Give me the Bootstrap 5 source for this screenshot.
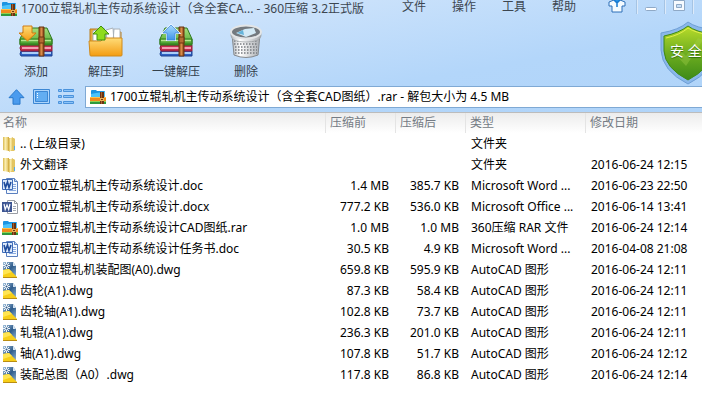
<!DOCTYPE html>
<html lang="zh-CN">
<head>
<meta charset="utf-8">
<meta name="viewport" content="width=device-width, initial-scale=1">
<title>360压缩</title>
<link href="https://cdn.jsdelivr.net/npm/bootstrap@5.3.0/dist/css/bootstrap.min.css" rel="stylesheet">
<style>
body{font-family:"Noto Sans","Noto Sans CJK SC",sans-serif;font-size:12px;line-height:20px;color:#000;background:#fff;overflow-x:hidden}
svg{display:block;flex:none}
.app-head{background:linear-gradient(170deg,#d8eafc 0%,#cbe2fb 25%,#b3d6fa 65%,#b0d4f9 100%);overflow:hidden}
.title-bar{height:20px;color:#3c4650;white-space:nowrap}
.title-text{padding-left:1px;line-height:18px}
.menu-set{gap:26px;margin-right:22px;line-height:14px}
.menu-set a{color:#3c4650;text-decoration:none}
.win-set .plain{width:28px;height:14px;border-left:1px solid #a5c4e4;box-shadow:inset 1px 0 #dceafa}
.win-set .skin{width:38px;border:0;box-shadow:none}
.win-set .close-btn{width:10px}
.plain{background:none;border:0;padding:0;color:inherit;display:flex;align-items:center;justify-content:center}
.tools{padding:3px 0 0 1px;height:62px}
.tools .plain{width:70px;flex-direction:column;justify-content:flex-start;color:#33404c}
.tools .plain span{line-height:22px}
.nav-line{padding:4px 0 4px 8px}
.nav-set{gap:8px;width:77px}
.path-box{border:1px solid #7fa9d4;border-right:0;background:#fff;height:22px;padding-left:4px}
.path-box input{border:0;outline:0;padding:0 0 0 4px;font-size:12px;color:#000;background:none;min-width:0}
.shield{right:-14px;top:21px}
.shield span{position:absolute;left:10px;top:19px;color:#fff;font-size:14px;line-height:22px;white-space:nowrap;text-shadow:0 1px 1px #2f6a0a}
.files{table-layout:fixed;width:100%;border-collapse:separate;border-spacing:0}
.files th{height:21px;padding:0 0 0 5px;font-weight:400;color:#747b84;border-top:1px solid #bcbcbc;background:linear-gradient(#ececec,#fff);line-height:20px}
.files th+th{box-shadow:inset 1px 0 #e4e4e4}
.files th:first-child{padding-left:3px}
.files td{height:21px;padding:0 0 0 6px;line-height:21px;white-space:nowrap}
.files td:first-child{padding-left:2px}
.files td.num{text-align:right;padding:0 6px 0 0}
.c-size{width:70px}.c-type{width:120px}.c-date{width:117px}
.fname{gap:2px}
</style>
<script src="https://cdn.jsdelivr.net/npm/bootstrap@5.3.0/dist/js/bootstrap.bundle.min.js"></script>
</head>
<body>
<svg width="0" height="0" class="position-absolute" aria-hidden="true">
<defs>
<linearGradient id="gy" x2="1"><stop stop-color="#d9b94e"/><stop offset=".4" stop-color="#fbeeb0"/><stop offset="1" stop-color="#dcb94c"/></linearGradient>
<linearGradient id="go" x2="0" y2="1"><stop stop-color="#ffdc78"/><stop offset="1" stop-color="#f39c12"/></linearGradient>
<linearGradient id="gb" x2="0" y2="1"><stop stop-color="#a9dcff"/><stop offset="1" stop-color="#3d93ea"/></linearGradient>
<linearGradient id="gg" x2="0" y2="1"><stop stop-color="#a9df7e"/><stop offset="1" stop-color="#4aa52e"/></linearGradient>
<linearGradient id="gs" x2="0" y2="1"><stop stop-color="#b9dc2a"/><stop offset=".5" stop-color="#6fae20"/><stop offset="1" stop-color="#3d8a17"/></linearGradient>
<linearGradient id="gw" x2="1"><stop stop-color="#b5b9bd"/><stop offset=".3" stop-color="#fff"/><stop offset="1" stop-color="#a9adb1"/></linearGradient>
<linearGradient id="gd" x2="1" y2="1"><stop stop-color="#a8c6e0"/><stop offset=".5" stop-color="#2f5c8c"/><stop offset="1" stop-color="#8fb4d4"/></linearGradient>
<linearGradient id="gt" x2="1"><stop stop-color="#8a4a18"/><stop offset=".5" stop-color="#d98b48"/><stop offset="1" stop-color="#7a3a10"/></linearGradient>
<symbol id="i-rar" viewBox="0 0 16 14"><path d="M1 1q0-1 1-1h4l1 1h7q1 0 1 1v5H1z" fill="#1c94e2"/><path d="M1 4l5-1 9-1v5H1z" fill="#4cc3fa"/><path d="M0 7h16v4H0z" fill="#f08a1c"/><path d="M0 7h16v1H0z" fill="#ffc04a"/><path d="M0 11h16v3H0z" fill="#2f9a3e"/><path d="M0 11h16v1H0z" fill="#8fd050"/><path d="M10 2h4v12h-4z" fill="#6b3212"/><path d="M11 2h1v12h-1z" fill="#a8622d"/><path d="M10 8h4v3h-4z" fill="#e8b45c"/><path d="M11 9h2v1h-2z" fill="#6b3212"/></symbol>
<symbol id="i-dir" viewBox="0 0 16 16"><path d="M1 1l6 0v14l-6-1z" fill="url(#gy)"/><path d="M7 2h5l1 1v11l-1 1H7z" fill="#e3c563"/><path d="M7 3l4-2v12l-4 3z" fill="url(#gy)"/><path d="M12 10h1v4h-1z" fill="#55a9e6"/><path d="M6.500 1v14" stroke="#cfa83e" stroke-width=".7"/></symbol>
<symbol id="i-doc" viewBox="0 0 16 16"><path d="M4.500.5h8l3 3v12h-11z" fill="#f5faff" stroke="#5a7fbf"/><path d="M12.500.5v3h3" fill="#bcd3f2" stroke="#5a7fbf"/><path d="M11 6.500h3M11 8.500h3M11 10.500h3M7 12.500h7" stroke="#8aaae0"/><path d="M.5 1.500h10v10H.5z" fill="#dce9fa" stroke="#3f6cb8"/><path d="M2 4l1.500 5.500L5.500 4 7 9.500 9 4" fill="none" stroke="#1f4c9c" stroke-width="1.600"/></symbol>
<symbol id="i-docx" viewBox="0 0 16 16"><path d="M5.500 1.500h7l3 3v10h-10z" fill="#fff" stroke="#9a9da4"/><path d="M12.500 1.500v3h3" fill="none" stroke="#9a9da4"/><path d="M11 7.500h3M11 9.500h3M11 11.500h3" stroke="#a4a9b4"/><path d="M0 3h10v10H0z" fill="#3d5592"/><path d="M2 5l1.200 5.500L5 6l1.700 4.500L8 5" fill="none" stroke="#fff" stroke-width="1.200"/></symbol>
<symbol id="i-dwg" viewBox="0 0 16 16"><path d="M1 0h10l3 4v11H1z" fill="url(#gd)"/><path d="M11 0v4h3z" fill="#d6e5f2"/><path d="M1 8l6-1 8 8H1z" fill="#f7ce18"/><path d="M1 8l6-1 3 3-9 3z" fill="#ffe552"/><path d="M1 15h14v1H1z" fill="#b98d12"/><path d="M2 1l5 5M7 1L2 6M4.500 0v7M1 3.500h7" stroke="#fff" stroke-width=".9"/><circle cx="4.500" cy="3.500" r="1" fill="#2f5c8c"/></symbol>
<symbol id="i-books" viewBox="0 0 36 36"><path d="M3 27h31v5H3l-1-2z" fill="#2f62c4" stroke="#1c4190"/><path d="M4 29h29" stroke="#a9cdf7" stroke-width="2"/><path d="M3 21h31v6H3l-1-3z" fill="#c22c50" stroke="#8d1a38"/><path d="M4 24h29" stroke="#f39cb0" stroke-width="2"/><path d="M7 4h22l5 11v6H2v-6z" fill="url(#gg)" stroke="#2e7a1d"/><path d="M2 15h32v5H2z" fill="#53a637" stroke="#2e7a1d"/><path d="M3 16.500h30" stroke="#b5e68f" stroke-width="1.500"/></symbol>
<symbol id="i-strap" viewBox="0 0 36 36"><path d="M21 3h5v29h-5z" fill="url(#gt)" stroke="#6b3410"/><path d="M21 13h5v6h-5z" fill="#b56c32" stroke="#6b3410"/></symbol>
</defs>
</svg>

<header class="app-head position-relative">
  <div class="title-bar d-flex align-items-start">
    <div class="title-text d-flex align-items-center flex-grow-1 gap-1 text-truncate">
      <svg width="16" height="14"><use href="#i-rar"/></svg>
      <span>1700立辊轧机主传动系统设计（含全套CA... - 360压缩 3.2正式版</span>
    </div>
    <nav class="menu-set d-flex align-items-center"><a href="#">文件</a><a href="#">操作</a><a href="#">工具</a><a href="#">帮助</a></nav>
    <div class="win-set d-flex">
      <button class="plain skin" aria-label="换肤"><svg width="18" height="14" viewBox="0 0 18 14"><path d="M6 0L1 2v4h3v6h10V6h3V2l-5-2-3 3z" fill="#f5fbff" stroke="#2c6fb7"/><path d="M6 0l3 3 3-3M9 3v4" fill="#2693e8" stroke="#1779d0" stroke-width="1.500"/></svg></button>
      <button class="plain" aria-label="最小化"><svg width="12" height="14" viewBox="0 0 12 14"><rect x=".5" y="7.500" width="11" height="3" rx="1" fill="#fff" stroke="#8fa9c6"/></svg></button>
      <button class="plain" aria-label="最大化"><svg width="12" height="14" viewBox="0 0 12 14"><path d="M.5.5h11v10H.5z" fill="#f7fbff" stroke="#8fa9c6"/><path d="M3.500 4.500h5v3h-5z" fill="#c9e0f8" stroke="#8fa9c6"/></svg></button>
      <button class="plain close-btn" aria-label="关闭"></button>
    </div>
  </div>
  <div class="tools d-flex">
    <button class="plain"><svg width="36" height="38" viewBox="0 0 36 36"><use href="#i-books"/><use href="#i-strap"/><path d="M5 2h9v7h4l-8.500 8L1 9h4z" fill="url(#go)" stroke="#d17a12"/></svg><span>添加</span></button>
    <button class="plain"><svg width="36" height="38" viewBox="0 0 36 36"><path d="M2 5h9l2 3h20v10H2z" fill="#e9a93c" stroke="#b87c1d"/><path d="M5 7l11-3 4 13H5zM18 6l7-2 1 14h-8zM26 5h6v13h-7z" fill="#fff" stroke="#a9b2ba"/><path d="M1 17h12l3-3h18v17q0 1-1 1H3q-1 0-1-1z" fill="url(#go)" stroke="#d08a1b"/><path d="M13 2l8 8h-4v6H9v-6H5z" fill="#8fdc1e" stroke="#3f9010"/></svg><span>解压到</span></button>
    <button class="plain"><svg width="36" height="38" viewBox="0 0 36 36"><path d="M30 8l4 13v5l-5-3z" fill="#b02a48"/><use href="#i-books"/><use href="#i-strap"/><path d="M13 1l8 8h-4v7H9V9H5z" fill="#fff" stroke="#eaf6ff" stroke-width="2"/><path d="M13 1l8 8h-4v7H9V9H5z" fill="url(#gb)" stroke="#3b83d6" stroke-width=".7"/></svg><span>一键解压</span></button>
    <button class="plain"><svg width="36" height="38" viewBox="0 0 36 36"><path d="M4 10h28l-2 21q-12 5-24 0z" fill="url(#gw)" stroke="#85898d"/><path d="M6 17h24M6 20h24M7 23h22M7 26h22M7 29h22" stroke="#777b80" stroke-width="1.300" stroke-dasharray="1.500 1.500"/><path d="M3 8v4q1 6 15 6t15-6V8z" fill="url(#gw)" stroke="#999da1" stroke-width=".7"/><ellipse cx="18" cy="8" rx="15" ry="6.500" fill="#73797e" stroke="#e3e5e6" stroke-width="2"/><path d="M8 9l9-4 9-1 2 5-10 4z" fill="#d3eaf6"/><path d="M9 9l6-3 1 5z" fill="#65b4da"/></svg><span>删除</span></button>
  </div>
  <div class="nav-line d-flex align-items-center">
    <div class="nav-set d-flex align-items-center">
      <button class="plain" aria-label="向上"><svg width="17" height="16" viewBox="0 0 17 16"><path d="M8.500.7l7.500 8h-4v6.500H5V8.700H1z" fill="#4a9bee" stroke="#2879cc"/></svg></button>
      <button class="plain" aria-label="窗格"><svg width="17" height="16" viewBox="0 0 17 16"><path d="M.5.5h16v14H.5z" fill="#acd4fb" stroke="#3c87d4"/><path d="M2.500 2.500h12v10h-12z" fill="#62adf2" stroke="#3c87d4"/><path d="M4.500 4v5" stroke="#fff" stroke-dasharray="1 1"/></svg></button>
      <button class="plain" aria-label="列表"><svg width="16" height="16" viewBox="0 0 16 16"><path d="M.5.5h3v2h-3zM.5 6.500h3v2h-3zM.5 12.500h3v2h-3zM5.500.5h10v2h-10zM5.500 6.500h10v2h-10zM5.500 12.500h10v2h-10z" fill="#8cc3f8" stroke="#4b93dc"/></svg></button>
    </div>
    <div class="path-box d-flex align-items-center flex-grow-1">
      <svg width="16" height="14"><use href="#i-rar"/></svg>
      <input class="flex-grow-1" type="text" aria-label="路径" value="1700立辊轧机主传动系统设计（含全套CAD图纸）.rar - 解包大小为 4.5 MB">
    </div>
  </div>
  <div class="shield position-absolute">
    <svg width="56" height="64" viewBox="0 0 56 64"><path d="M28 1q8 6 27 8v20Q54 50 28 63 2 50 1 29V12Q19 9 28 1z" fill="#8ab8ea" stroke="#6f9fd6"/><path d="M28 5q8 6 24 8v17Q51 47 28 59 5 47 4 30V15Q19 12 28 5z" fill="url(#gs)" stroke="#3f8a16"/><path d="M28 7q8 5 22 7M6 17q14-3 22-10" stroke="#e4f04c" fill="none"/><path d="M15 33l5-4 6 6 12-18 5 2-17 26z" fill="#a7d24c" opacity=".35"/></svg>
    <span>安 全</span>
  </div>
</header>

<main>
<table class="files">
<colgroup><col><col class="c-size"><col class="c-size"><col class="c-type"><col class="c-date"></colgroup>
<thead><tr><th>名称</th><th>压缩前</th><th>压缩后</th><th>类型</th><th>修改日期</th></tr></thead>
<tbody>
<tr><td><div class="fname d-flex align-items-center"><svg width="16" height="16"><use href="#i-dir"/></svg>.. (上级目录)</div></td><td class="num"></td><td class="num"></td><td>文件夹</td><td></td></tr>
<tr><td><div class="fname d-flex align-items-center"><svg width="16" height="16"><use href="#i-dir"/></svg>外文翻译</div></td><td class="num"></td><td class="num"></td><td>文件夹</td><td>2016-06-24 12:15</td></tr>
<tr><td><div class="fname d-flex align-items-center"><svg width="16" height="16"><use href="#i-doc"/></svg>1700立辊轧机主传动系统设计.doc</div></td><td class="num">1.4 MB</td><td class="num">385.7 KB</td><td>Microsoft Word ...</td><td>2016-06-23 22:50</td></tr>
<tr><td><div class="fname d-flex align-items-center"><svg width="16" height="16"><use href="#i-docx"/></svg>1700立辊轧机主传动系统设计.docx</div></td><td class="num">777.2 KB</td><td class="num">536.0 KB</td><td>Microsoft Office ...</td><td>2016-06-14 13:41</td></tr>
<tr><td><div class="fname d-flex align-items-center"><svg width="16" height="14"><use href="#i-rar"/></svg>1700立辊轧机主传动系统设计CAD图纸.rar</div></td><td class="num">1.0 MB</td><td class="num">1.0 MB</td><td>360压缩 RAR 文件</td><td>2016-06-24 12:14</td></tr>
<tr><td><div class="fname d-flex align-items-center"><svg width="16" height="16"><use href="#i-doc"/></svg>1700立辊轧机主传动系统设计任务书.doc</div></td><td class="num">30.5 KB</td><td class="num">4.9 KB</td><td>Microsoft Word ...</td><td>2016-04-08 21:08</td></tr>
<tr><td><div class="fname d-flex align-items-center"><svg width="16" height="16"><use href="#i-dwg"/></svg>1700立辊轧机装配图(A0).dwg</div></td><td class="num">659.8 KB</td><td class="num">595.9 KB</td><td>AutoCAD 图形</td><td>2016-06-24 12:11</td></tr>
<tr><td><div class="fname d-flex align-items-center"><svg width="16" height="16"><use href="#i-dwg"/></svg>齿轮(A1).dwg</div></td><td class="num">87.3 KB</td><td class="num">58.4 KB</td><td>AutoCAD 图形</td><td>2016-06-24 12:11</td></tr>
<tr><td><div class="fname d-flex align-items-center"><svg width="16" height="16"><use href="#i-dwg"/></svg>齿轮轴(A1).dwg</div></td><td class="num">102.8 KB</td><td class="num">73.7 KB</td><td>AutoCAD 图形</td><td>2016-06-24 12:11</td></tr>
<tr><td><div class="fname d-flex align-items-center"><svg width="16" height="16"><use href="#i-dwg"/></svg>轧辊(A1).dwg</div></td><td class="num">236.3 KB</td><td class="num">201.0 KB</td><td>AutoCAD 图形</td><td>2016-06-24 12:11</td></tr>
<tr><td><div class="fname d-flex align-items-center"><svg width="16" height="16"><use href="#i-dwg"/></svg>轴(A1).dwg</div></td><td class="num">107.8 KB</td><td class="num">51.7 KB</td><td>AutoCAD 图形</td><td>2016-06-24 12:12</td></tr>
<tr><td><div class="fname d-flex align-items-center"><svg width="16" height="16"><use href="#i-dwg"/></svg>装配总图（A0）.dwg</div></td><td class="num">117.8 KB</td><td class="num">86.8 KB</td><td>AutoCAD 图形</td><td>2016-06-24 12:14</td></tr>
</tbody>
</table>
</main>
</body>
</html>
